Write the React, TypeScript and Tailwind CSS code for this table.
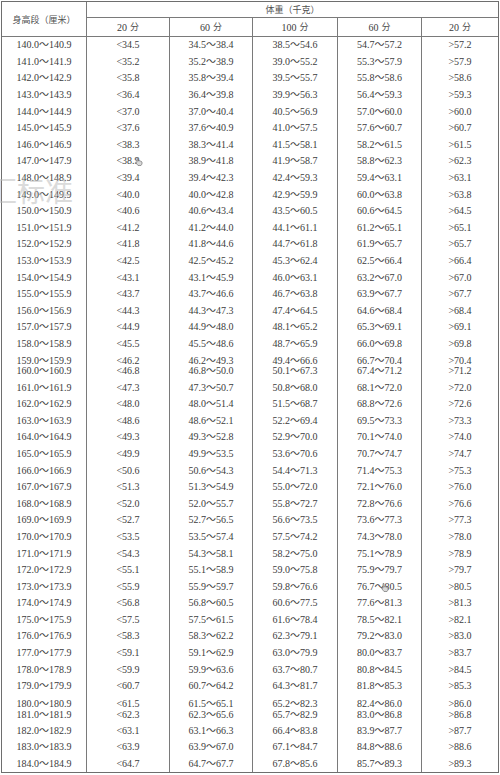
import React from "react";

const raw = `140|34.5|34.5～38.4|38.5～54.6|54.7～57.2|57.2
141|35.2|35.2～38.9|39.0～55.2|55.3～57.9|57.9
142|35.8|35.8～39.4|39.5～55.7|55.8～58.6|58.6
143|36.4|36.4～39.8|39.9～56.3|56.4～59.3|59.3
144|37.0|37.0～40.4|40.5～56.9|57.0～60.0|60.0
145|37.6|37.6～40.9|41.0～57.5|57.6～60.7|60.7
146|38.3|38.3～41.4|41.5～58.1|58.2～61.5|61.5
147|38.9|38.9～41.8|41.9～58.7|58.8～62.3|62.3
148|39.4|39.4～42.3|42.4～59.3|59.4～63.1|63.1
149|40.0|40.0～42.8|42.9～59.9|60.0～63.8|63.8
150|40.6|40.6～43.4|43.5～60.5|60.6～64.5|64.5
151|41.2|41.2～44.0|44.1～61.1|61.2～65.1|65.1
152|41.8|41.8～44.6|44.7～61.8|61.9～65.7|65.7
153|42.5|42.5～45.2|45.3～62.4|62.5～66.4|66.4
154|43.1|43.1～45.9|46.0～63.1|63.2～67.0|67.0
155|43.7|43.7～46.6|46.7～63.8|63.9～67.7|67.7
156|44.3|44.3～47.3|47.4～64.5|64.6～68.4|68.4
157|44.9|44.9～48.0|48.1～65.2|65.3～69.1|69.1
158|45.5|45.5～48.6|48.7～65.9|66.0～69.8|69.8
159|46.2|46.2～49.3|49.4～66.6|66.7～70.4|70.4
160|46.8|46.8～50.0|50.1～67.3|67.4～71.2|71.2
161|47.3|47.3～50.7|50.8～68.0|68.1～72.0|72.0
162|48.0|48.0～51.4|51.5～68.7|68.8～72.6|72.6
163|48.6|48.6～52.1|52.2～69.4|69.5～73.3|73.3
164|49.3|49.3～52.8|52.9～70.0|70.1～74.0|74.0
165|49.9|49.9～53.5|53.6～70.6|70.7～74.7|74.7
166|50.6|50.6～54.3|54.4～71.3|71.4～75.3|75.3
167|51.3|51.3～54.9|55.0～72.0|72.1～76.0|76.0
168|52.0|52.0～55.7|55.8～72.7|72.8～76.6|76.6
169|52.7|52.7～56.5|56.6～73.5|73.6～77.3|77.3
170|53.5|53.5～57.4|57.5～74.2|74.3～78.0|78.0
171|54.3|54.3～58.1|58.2～75.0|75.1～78.9|78.9
172|55.1|55.1～58.9|59.0～75.8|75.9～79.7|79.7
173|55.9|55.9～59.7|59.8～76.6|76.7～80.5|80.5
174|56.8|56.8～60.5|60.6～77.5|77.6～81.3|81.3
175|57.5|57.5～61.5|61.6～78.4|78.5～82.1|82.1
176|58.3|58.3～62.2|62.3～79.1|79.2～83.0|83.0
177|59.1|59.1～62.9|63.0～79.9|80.0～83.7|83.7
178|59.9|59.9～63.6|63.7～80.7|80.8～84.5|84.5
179|60.7|60.7～64.2|64.3～81.7|81.8～85.3|85.3
180|61.5|61.5～65.1|65.2～82.3|82.4～86.0|86.0
181|62.3|62.3～65.6|65.7～82.9|83.0～86.8|86.8
182|63.1|63.1～66.3|66.4～83.8|83.9～87.7|87.7
183|63.9|63.9～67.0|67.1～84.7|84.8～88.6|88.6
184|64.7|64.7～67.7|67.8～85.6|85.7～89.3|89.3`;

type Row = string[];
const rows: Row[] = raw.split("\n").map((l) => {
  const [h, lo, a, b, c, hi] = l.split("|");
  return [`${h}.0～${h}.9`, `<${lo}`, a, b, c, `>${hi}`];
});

const groups: { rows: Row[]; tall: boolean; h: string }[] = [];
for (let i = 0; i < rows.length; ) {
  const h = parseInt(rows[i][0], 10);
  if (h === 159 || h === 180) {
    groups.push({ rows: [rows[i], rows[i + 1]], tall: true, h: String(h) });
    i += 2;
  } else {
    groups.push({ rows: [rows[i]], tall: false, h: String(h) });
    i += 1;
  }
}

const cellBase = "flex flex-col items-center justify-center border-r border-[#7a7a7a]";

function Cursor({ className }: { className: string }) {
  return (
    <svg className={className} width="8" height="9" viewBox="0 0 8 9">
      <path
        d="M2 0.5 L3 0.5 L3 4 L4 3.5 L5 4 L6 4.2 L7 5 L7 7 L6 8.5 L3 8.5 L1 6 L0.6 5 L2 5.2 Z"
        fill="#d8d8d8"
        stroke="#777"
        strokeWidth="0.7"
      />
    </svg>
  );
}

export default function App() {
  return (
    <div className="relative w-[500px] h-[775px] bg-white overflow-hidden text-[#3c3c3c] font-['Liberation_Serif','Noto_Sans_CJK_SC',serif]">
      <div className="ml-[1px] mt-[1px] w-[498px] border border-[#6e6e6e]">
        {/* header */}
        <div className="grid grid-cols-[85px_83px_83px_85px_84px_76px] grid-rows-[16px_18px] border-b border-[#7a7a7a]">
          <div className="row-span-2 flex items-center justify-center border-r border-[#7a7a7a] text-[9px] font-['Noto_Sans_CJK_SC',sans-serif] text-[#505050] pt-[1px]">
            身高段（厘米）
          </div>
          <div className="col-span-5 flex items-center justify-center border-b border-[#7a7a7a] text-[9px] font-['Noto_Sans_CJK_SC',sans-serif] text-[#505050]">
            体重（千克）
          </div>
          {["20", "60", "100", "60", "20"].map((s, i) => (
            <div
              key={i}
              className={`flex items-center justify-center text-[10px] ${i < 4 ? "border-r border-[#7a7a7a]" : ""}`}
            >
              {s}
              <span className="ml-[3px] text-[9px] font-['Noto_Sans_CJK_SC',sans-serif] text-[#505050]">分</span>
            </div>
          ))}
        </div>
        {/* body */}
        {groups.map((g) => (
          <div
            key={g.h}
            className={`grid grid-cols-[85px_83px_83px_85px_84px_76px] text-[10px] ${
              g.tall ? (g.h === "159" ? "h-[27px] leading-[10px]" : "h-[28px] leading-[11px]") : "h-[16.6px] leading-[16px]"
            }`}
          >
            {[0, 1, 2, 3, 4, 5].map((c) => (
              <div key={c} className={c < 5 ? cellBase : "flex flex-col items-center justify-center"}>
                {g.rows.map((r, k) => (
                  <span key={k} className="whitespace-nowrap">
                    {r[c]}
                  </span>
                ))}
              </div>
            ))}
          </div>
        ))}
      </div>

      {/* watermark */}
      <div className="absolute left-[-11px] top-[174px] text-[28px] leading-[32px] tracking-[0px] text-[#b8b8b8] opacity-50 font-['Noto_Sans_CJK_SC',sans-serif] pointer-events-none whitespace-nowrap">
        汇标准
      </div>

      <Cursor className="absolute left-[135px] top-[157px]" />
      <Cursor className="absolute left-[381px] top-[583px]" />
    </div>
  );
}
